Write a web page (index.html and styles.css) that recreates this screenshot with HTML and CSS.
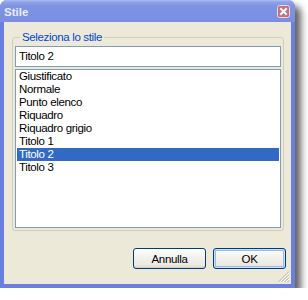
FILE: index.html
```html
<!DOCTYPE html>
<html>
<head>
<meta charset="utf-8">
<link rel="stylesheet" href="styles.css">
</head>
<body>
<div class="window">
  <div class="titlebar">
    <span class="title">Stile</span>
    <span class="close">
      <svg width="13" height="13" viewBox="0 0 13 13">
        <rect x="0.5" y="0.5" width="12" height="12" rx="2" fill="#c66f80" stroke="#efd9e0"/>
        <path d="M4 4 L9 9 M9 4 L4 9" stroke="#ffffff" stroke-width="2" stroke-linecap="square"/>
      </svg>
    </span>
  </div>
  <div class="client">
    <fieldset class="group">
      <legend class="group-label">Seleziona lo stile</legend>
      <div class="edit">Titolo 2</div>
      <ul class="list">
        <li class="item">Giustificato</li>
        <li class="item">Normale</li>
        <li class="item">Punto elenco</li>
        <li class="item">Riquadro</li>
        <li class="item">Riquadro grigio</li>
        <li class="item">Titolo 1</li>
        <li class="item selected">Titolo 2</li>
        <li class="item">Titolo 3</li>
      </ul>
    </fieldset>
    <div class="buttons">
      <button class="btn">Annulla</button>
      <button class="btn default">OK</button>
    </div>
    <svg class="grip" width="12" height="12" viewBox="0 0 12 12">
      <path d="M11 0.5 L0.5 11 M11 3.5 L3.5 11 M11 6.5 L6.5 11 M11 9.5 L9.5 11" stroke="#b4b09f" stroke-width="1"/>
      <path d="M11.5 1.5 L1.5 11.5 M11.5 4.5 L4.5 11.5 M11.5 7.5 L7.5 11.5" stroke="#ffffff" stroke-width="1"/>
    </svg>
  </div>
</div>
</body>
</html>
```

FILE: styles.css
```css
html, body {
  margin: 0;
  padding: 0;
  background: #ffffff;
}

body {
  font-family: "Liberation Sans", Arial, sans-serif;
  font-size: 11.5px;
  letter-spacing: -0.35px;
  color: #000000;
}

.window {
  width: 295px;
  height: 288px;
  box-sizing: border-box;
  background: #6b7fe2;
  border-radius: 7px 7px 0 0;
  padding: 0 4px 4px 4px;
  display: flex;
  flex-direction: column;
  box-shadow: 6px 6px 7px rgba(0, 0, 0, 0.62);
}

.titlebar {
  height: 22px;
  margin: 0 -4px;
  padding: 2px 5px 0 4px;
  box-sizing: border-box;
  border-radius: 7px 7px 0 0;
  background: linear-gradient(#b0c0f2 0px, #8fa2e8 2px, #7e93e3 6px, #7b8fe2 100%);
  display: flex;
  align-items: center;
  justify-content: space-between;
}

.title {
  font-weight: bold;
  font-size: 11.5px;
  letter-spacing: 0;
  color: #e8eefc;
}

.close {
  display: flex;
  width: 13px;
  height: 13px;
  margin-top: -2px;
}

.client {
  position: relative;
  flex: 1;
  background: #ece9d8;
  padding: 9px 0 0 8px;
  display: flex;
  flex-direction: column;
}

.group {
  width: 272px;
  box-sizing: border-box;
  margin: 0;
  padding: 2px 2px 2px 2px;
  border: 1px solid #d0d0bf;
  border-radius: 3px;
}

.group-label {
  padding: 0 2px;
  margin-left: 5px;
  line-height: 13px;
  color: #0046d5;
}

.edit {
  height: 21px;
  box-sizing: border-box;
  border: 1px solid #7f9db9;
  background: #ffffff;
  line-height: 19px;
  padding: 0 3px;
  margin-bottom: 2px;
}

.list {
  list-style: none;
  margin: 0;
  height: 159px;
  box-sizing: border-box;
  border: 1px solid #7f9db9;
  background: #ffffff;
  padding: 0 1px 0 1px;
}

.item {
  height: 13px;
  line-height: 13px;
  padding-left: 2px;
  white-space: nowrap;
}

.item.selected {
  background: #316ac5;
  color: #ffffff;
}

.buttons {
  margin-top: 17px;
  padding-right: 5px;
  display: flex;
  justify-content: flex-end;
  gap: 7px;
}

.btn {
  width: 73px;
  height: 21px;
  box-sizing: border-box;
  border: 1px solid #003c74;
  border-radius: 3px;
  background: linear-gradient(#ffffff 0%, #f3f2ee 40%, #ebe9e2 85%, #d8d3c8 100%);
  font-family: "Liberation Sans", Arial, sans-serif;
  font-size: 11.5px;
  letter-spacing: -0.35px;
  color: #000000;
  padding: 0;
  box-shadow: inset 0 -1px 0 #d6d0c5;
}

.btn.default {
  box-shadow: inset 0 0 0 1px #cde0fb, inset 0 0 0 2px #9ab9ec;
}

.grip {
  position: absolute;
  right: 1px;
  bottom: 1px;
}
```
